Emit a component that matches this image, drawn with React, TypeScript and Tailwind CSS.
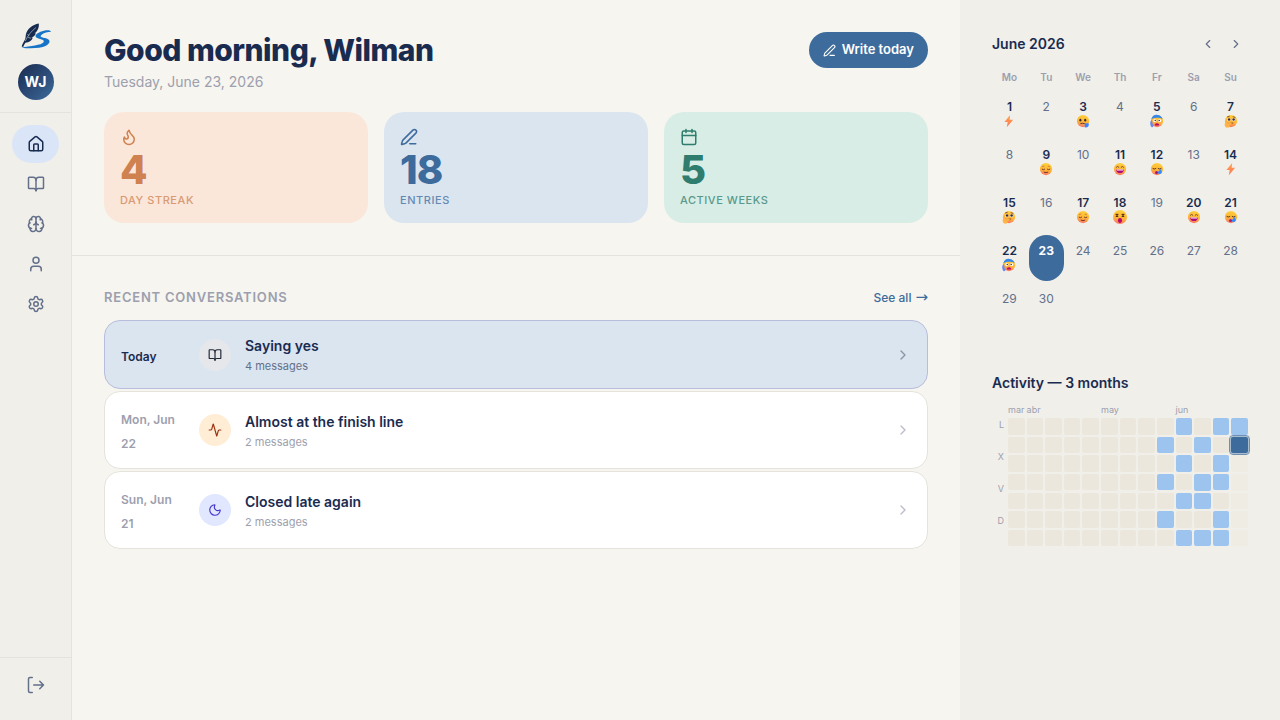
import type { ReactNode } from "react";
import {
  Activity,
  BookOpen,
  Brain,
  Calendar,
  ChevronLeft,
  ChevronRight,
  Flame,
  House,
  Moon,
  PenLine,
  Settings,
  User,
} from "lucide-react";

type MoodName = "bolt" | "sick" | "anxious" | "thinking" | "calm" | "happy" | "sleepy" | "dizzy";

const moods: Record<number, MoodName> = {
  1: "bolt",
  3: "sick",
  5: "anxious",
  7: "thinking",
  9: "calm",
  11: "happy",
  12: "sleepy",
  14: "bolt",
  15: "thinking",
  17: "calm",
  18: "dizzy",
  20: "happy",
  21: "sleepy",
  22: "anxious",
};

const weekdays = ["Mo", "Tu", "We", "Th", "Fr", "Sa", "Su"];
const months = ["mar", "abr", "", "", "", "may", "", "", "", "jun", "", "", ""];

// one string per weekday: 0 empty, 1 entry, 2 today, 3 future
const heatmap = [
  "0000000001011",
  "0000000010102",
  "0000000001013",
  "0000000010113",
  "0000000001103",
  "0000000010013",
  "0000000001113",
];

const heatClasses: Record<string, string> = {
  "0": "bg-[#ebe7dc]",
  "1": "bg-[#9dc3ef]",
  "2": "bg-[#3d6b9c] outline-1 outline-offset-1 outline-[#6f8fb2] ring-1 ring-[#a9bdd0]",
  "3": "bg-[#eeece3]",
};

function Logo() {
  return (
    <svg width="32" height="32" viewBox="0 0 32 32" fill="none">
      <path
        d="M31 11.800C31 9.400 24.500 9.900 20.500 11.700c-5.500 2.500-6.500 5-2.500 6.600 3 1.200 7 1.700 5.500 4C21.500 25.400 10 26 1.500 27.700c8 .9 19 .8 24-1.700 5.200-2.500 5.700-6.200-.3-7.900-3.400-.9-5.900-1.300-3.900-3.200 2.100-2 7-3.100 9.700-3.100z"
        fill="#1673c8"
      />
      <path
        d="M18.800 3.400C12.600 4.500 6.600 9 5.800 15c-.2 1.400 0 2.600-.7 4.200-1 2.200-2.500 4-3.500 7.300l1.600.4c.5-1.700 1.400-3 2.200-4.200 3.700-.3 6.400-2.300 7.400-5l-1.600.1c2.200-.8 4.100-2.400 4.700-4.500l-1.400.2c2.400-1.900 4.900-5.400 4.300-10.100z"
        fill="#172b50"
      />
      <path d="M16 7.500C11.500 11 7.800 15.500 5.300 21M7.500 14l1.500 1.700M11 18.300l-3-1.100" stroke="#f0efea" strokeWidth=".5" />
    </svg>
  );
}

function Face({ children }: { children: ReactNode }) {
  return (
    <>
      <circle cx="16" cy="16" r="14" fill="url(#face)" />
      {children}
    </>
  );
}

function MoodShape({ name }: { name: MoodName }) {
  switch (name) {
    case "bolt":
      return <path d="M18.500 2 5.500 18h7.500l-2 12L25.500 13H17.500z" fill="url(#bolt)" />;
    case "sick":
      return (
        <Face>
          <ellipse cx="10" cy="14" rx="2.400" ry="3" fill="#402a32" />
          <ellipse cx="21" cy="14" rx="2.400" ry="3" fill="#402a32" />
          <path d="M10 22q5-1.500 10 0" stroke="#593331" strokeWidth="2.200" fill="none" />
          <path d="M20 21h9v6q-3 5-9 3z" fill="#3c83ff" />
        </Face>
      );
    case "anxious":
      return (
        <Face>
          <path d="M3 12C5 4 11 1 17 2c6 0 10 4 12 9-7-3-17-4-26 1z" fill="#3387ed" />
          <circle cx="11" cy="15" r="3.600" fill="#fff" />
          <circle cx="22" cy="15" r="3.600" fill="#fff" />
          <circle cx="12" cy="15" r="1.700" fill="#402a32" />
          <circle cx="21" cy="15" r="1.700" fill="#402a32" />
          <path d="M11 26.500c-1-7.500 11-7.500 10 0z" fill="#bc0867" />
          <path d="M3 14c4 1 1 8 4 10 2 4 0 7-3 6-4-3-5-12-1-16z" fill="#6687ef" />
        </Face>
      );
    case "thinking":
      return (
        <Face>
          <circle cx="11" cy="13" r="3.600" fill="#fff" />
          <circle cx="22" cy="13" r="3.600" fill="#fff" />
          <circle cx="11.500" cy="12.500" r="2.900" fill="#402a32" />
          <circle cx="22" cy="12.500" r="2.900" fill="#402a32" />
          <path d="m7 7 6-2M20 6l6 2M13 21.500l8-1" stroke="#6b3625" strokeWidth="1.800" />
          <path d="M3 19c2-2 4 0 5 3l8-2c3 0 2 3-1 4l-3 1c2 4-1 7-5 6-5 0-7-6-4-12z" fill="#ffb546" />
        </Face>
      );
    case "calm":
      return (
        <Face>
          <path d="M6.500 16q3.500 3 7 0M18.500 16q3.500 3 7 0M11 23q5 2.500 10 0" stroke="#713334" strokeWidth="2.200" fill="none" />
          <path d="M7 11q2-2 5-1.500M20 9.500q3-.5 5 1.500" stroke="#b5612f" strokeWidth="1.500" fill="none" />
        </Face>
      );
    case "happy":
      return (
        <Face>
          <path d="M7 12.500q3.500-4.500 7 0M18 12.500q3.500-4.500 7 0" stroke="#6b3c2e" strokeWidth="2" fill="none" />
          <path d="M7 17h18c0 11-18 11-18 0z" fill="#ad087d" />
          <path d="M8 17h16l-.8 2.500H8.800z" fill="#fff" />
        </Face>
      );
    case "sleepy":
      return (
        <Face>
          <path d="M6 14.500q4 3 8 0M18 14.500q4 3 8 0" stroke="#58312e" strokeWidth="2.200" fill="none" />
          <ellipse cx="15" cy="24" rx="3.500" ry="3.500" fill="#a31778" />
          <path d="M25 16c-4 4-8 6-7 9 1.500 4 8 3 9-1.500 0-3-1-4.500-2-7.500z" fill="#328cff" />
        </Face>
      );
    case "dizzy":
      return (
        <Face>
          <path d="m7.500 10 5 5m0-5-5 5M19.500 10l5 5m0-5-5 5" stroke="#593018" strokeWidth="2.200" />
          <ellipse cx="16" cy="23" rx="4.200" ry="4.800" fill="#b50873" />
        </Face>
      );
  }
}

function Mood({ name }: { name: MoodName }) {
  return (
    <svg className={name === "dizzy" ? "size-4" : "size-3.5"} viewBox="0 0 32 32">
      <defs>
        <linearGradient id="face" x1=".6" y1="0" x2=".4" y2="1">
          <stop stopColor="#ffd03c" />
          <stop offset=".6" stopColor="#fdb336" />
          <stop offset="1" stopColor="#fa7566" />
        </linearGradient>
        <linearGradient id="bolt" x1="0" y1="0" x2="0" y2="1">
          <stop stopColor="#ffa544" />
          <stop offset="1" stopColor="#ff7660" />
        </linearGradient>
      </defs>
      <MoodShape name={name} />
    </svg>
  );
}

function Sidebar() {
  const items = [House, BookOpen, Brain, User, Settings];
  return (
    <aside className="flex w-[72px] shrink-0 flex-col border-r border-[#e5e3dc] bg-[#f0efea]">
      <div className="flex h-[113px] flex-col items-center gap-3 border-b border-[#e5e3dc] pt-5">
        <Logo />
        <div className="flex size-9 items-center justify-center rounded-full bg-linear-135 from-[#1a2b50] to-[#3d6b9c] text-sm font-bold text-white">
          WJ
        </div>
      </div>
      <nav className="flex flex-1 flex-col gap-0.5 px-3 pt-3">
        {items.map((Icon, i) => (
          <a
            key={i}
            className={
              i === 0
                ? "flex h-[38px] items-center justify-center rounded-full bg-[#dae6f8] text-[#1a2b50]"
                : "flex h-[38px] items-center justify-center rounded-full text-[#63708a]"
            }
          >
            <Icon size={18} strokeWidth={2} />
          </a>
        ))}
      </nav>
      <div className="flex h-[63px] justify-center border-t border-[#e5e3dc] pt-[18px] text-[#63708a]">
        <svg width="18" height="18" viewBox="0 0 24 24" fill="none" stroke="currentColor" strokeWidth="2" strokeLinecap="round" strokeLinejoin="round">
          <path d="M7 22H4a2 2 0 0 1-2-2V4a2 2 0 0 1 2-2h3M17 17l5-5-5-5M22 12H9" />
        </svg>
      </div>
    </aside>
  );
}

const stats = [
  { icon: Flame, value: 4, label: "Day streak", card: "bg-[#fae7da] text-[#cf8150]" },
  { icon: PenLine, value: 18, label: "Entries", card: "bg-[#dbe5f0] text-[#3d6b9c]" },
  { icon: Calendar, value: 5, label: "Active weeks", card: "bg-[#d8ede5] text-[#2e7d6e]" },
];

const conversations = [
  { date: "Today", title: "Saying yes", count: 4, icon: BookOpen, badge: "bg-[#e5e7eb] text-[#1f2937]", today: true },
  { date: "Mon, Jun 22", title: "Almost at the finish line", count: 2, icon: Activity, badge: "bg-[#ffedd5] text-[#9a3412]", today: false },
  { date: "Sun, Jun 21", title: "Closed late again", count: 2, icon: Moon, badge: "bg-[#e0e7ff] text-[#4338ca]", today: false },
];

function Conversations() {
  return (
    <section className="border-t border-[#e5e3dc] px-8 pt-[31px]">
      <div className="flex h-[21px] items-center justify-between">
        <h2 className="text-[13px] font-semibold tracking-[0.06em] text-[#9d9fae] uppercase">Recent conversations</h2>
        <a className="flex items-baseline gap-1 text-xs leading-4 font-medium text-[#3d6b9c]">
          See all
          <span className="font-['DejaVu_Sans',sans-serif] text-[15px] leading-3 font-normal">→</span>
        </a>
      </div>
      <div className="mt-3 flex flex-col gap-0.5">
        {conversations.map(({ date, title, count, icon: Icon, badge, today }) => (
          <div
            key={date}
            className={
              today
                ? "flex h-[69px] items-center gap-3.5 rounded-2xl border border-[#b9bddd] bg-[#dbe5f0] px-4"
                : "flex h-[78px] items-center gap-3.5 rounded-2xl border border-[#e5e3dc] bg-white px-4"
            }
          >
            <div
              className={
                today
                  ? "w-16 pt-1 text-xs leading-6 font-semibold text-[#1a2b50]"
                  : "w-16 pt-[3px] text-xs leading-6 font-semibold text-[#9d9fae]"
              }
            >
              {date}
            </div>
            <div className={`flex size-8 items-center justify-center rounded-full ${badge}`}>
              <Icon size={14} strokeWidth={2} />
            </div>
            <div className="flex-1">
              <div className="text-sm leading-[21px] font-semibold text-[#1a2b50]">{title}</div>
              <div className={today ? "mt-0.5 text-[11px] leading-4 text-[#63708a]" : "mt-0.5 text-[11px] leading-4 text-[#9d9fae]"}>
                {count} messages
              </div>
            </div>
            <ChevronRight size={16} className={today ? "text-[#8b94a8]" : "text-[#bcbdca]"} />
          </div>
        ))}
      </div>
    </section>
  );
}

function MonthCalendar() {
  return (
    <section className="h-[341px]">
      <div className="flex h-6 items-center justify-between">
        <h3 className="text-sm font-semibold text-[#1a2b50]">June 2026</h3>
        <div className="flex gap-1 text-[#63708a]">
          <span className="flex size-6 items-center justify-center">
            <ChevronLeft size={14} />
          </span>
          <span className="flex size-6 items-center justify-center">
            <ChevronRight size={14} />
          </span>
        </div>
      </div>
      <div className="mt-[13px] grid grid-cols-7 gap-0.5 text-center text-[10px] leading-4 font-semibold text-[#9d9fae]">
        {weekdays.map((d) => (
          <span key={d}>{d}</span>
        ))}
      </div>
      <div className="mt-1.5 grid grid-cols-7 gap-0.5">
        {Array.from({ length: 30 }, (_, i) => i + 1).map((day) => (
          <div
            key={day}
            className={
              day === 23
                ? "flex h-[46px] flex-col items-center rounded-full bg-[#3d6b9c] pt-2 text-xs font-bold text-white"
                : moods[day]
                  ? "flex h-[46px] flex-col items-center pt-2 text-xs font-semibold text-[#1a2b50]"
                  : "flex h-[46px] flex-col items-center pt-2 text-xs text-[#63708a]"
            }
          >
            <span className="leading-4">{day}</span>
            <span className="flex h-3 items-center">{moods[day] && <Mood name={moods[day]} />}</span>
          </div>
        ))}
      </div>
    </section>
  );
}

function ActivityMap() {
  return (
    <section>
      <h3 className="text-sm leading-5 font-semibold text-[#1a2b50]">Activity — 3 months</h3>
      <div className="mt-3 ml-4 grid h-[13px] grid-cols-13 gap-0.5 text-[9px] leading-[10px] text-[#9d9fae]">
        {months.map((m, i) => (
          <span key={i} className="w-0 whitespace-nowrap">
            {m}
          </span>
        ))}
      </div>
      <div className="flex">
        <div className="w-4 text-[9px] leading-[14px] text-[#9d9fae]">
          {["L", "X", "V", "D"].map((d) => (
            <div key={d} className="h-8 pr-1 text-right">
              {d}
            </div>
          ))}
        </div>
        <div className="grid flex-1 grid-cols-13 gap-0.5">
          {heatmap.flatMap((row, r) =>
            row.split("").map((v, c) => (
              <span key={`${r}-${c}`} className={`aspect-square rounded-[2px] ${heatClasses[v]}`} />
            )),
          )}
        </div>
      </div>
    </section>
  );
}

export default function App() {
  return (
    <div className="flex h-screen overflow-hidden bg-[#f6f5f0] font-[Inter,sans-serif]">
      <Sidebar />
      <main className="flex-1">
        <header className="flex h-[112px] items-start justify-between px-8 pt-8">
          <div>
            <h1 className="text-[30px] leading-9 font-extrabold tracking-[-0.5px] text-[#1a2b50]">Good morning, Wilman</h1>
            <p className="mt-1 text-sm text-[#9d9fae]">Tuesday, June 23, 2026</p>
          </div>
          <button className="flex h-9 items-center gap-1.5 rounded-full bg-[#3d6b9c] px-3.5 text-[13px] font-semibold text-white">
            <PenLine size={13} />
            Write today
          </button>
        </header>
        <div className="grid grid-cols-3 gap-4 px-8 pb-8">
          {stats.map(({ icon: Icon, value, label, card }) => (
            <div key={label} className={`h-[111px] rounded-[20px] px-4 pt-4 ${card}`}>
              <Icon size={18} strokeWidth={2} />
              <div className="mt-1 text-[40px] leading-10 font-extrabold tracking-[-0.02em]">{value}</div>
              <div className="mt-0.5 text-[11px] leading-4 font-medium tracking-[0.05em] uppercase opacity-75">{label}</div>
            </div>
          ))}
        </div>
        <Conversations />
      </main>
      <aside className="w-80 shrink-0 bg-[#f0efea] p-8">
        <MonthCalendar />
        <ActivityMap />
      </aside>
    </div>
  );
}
